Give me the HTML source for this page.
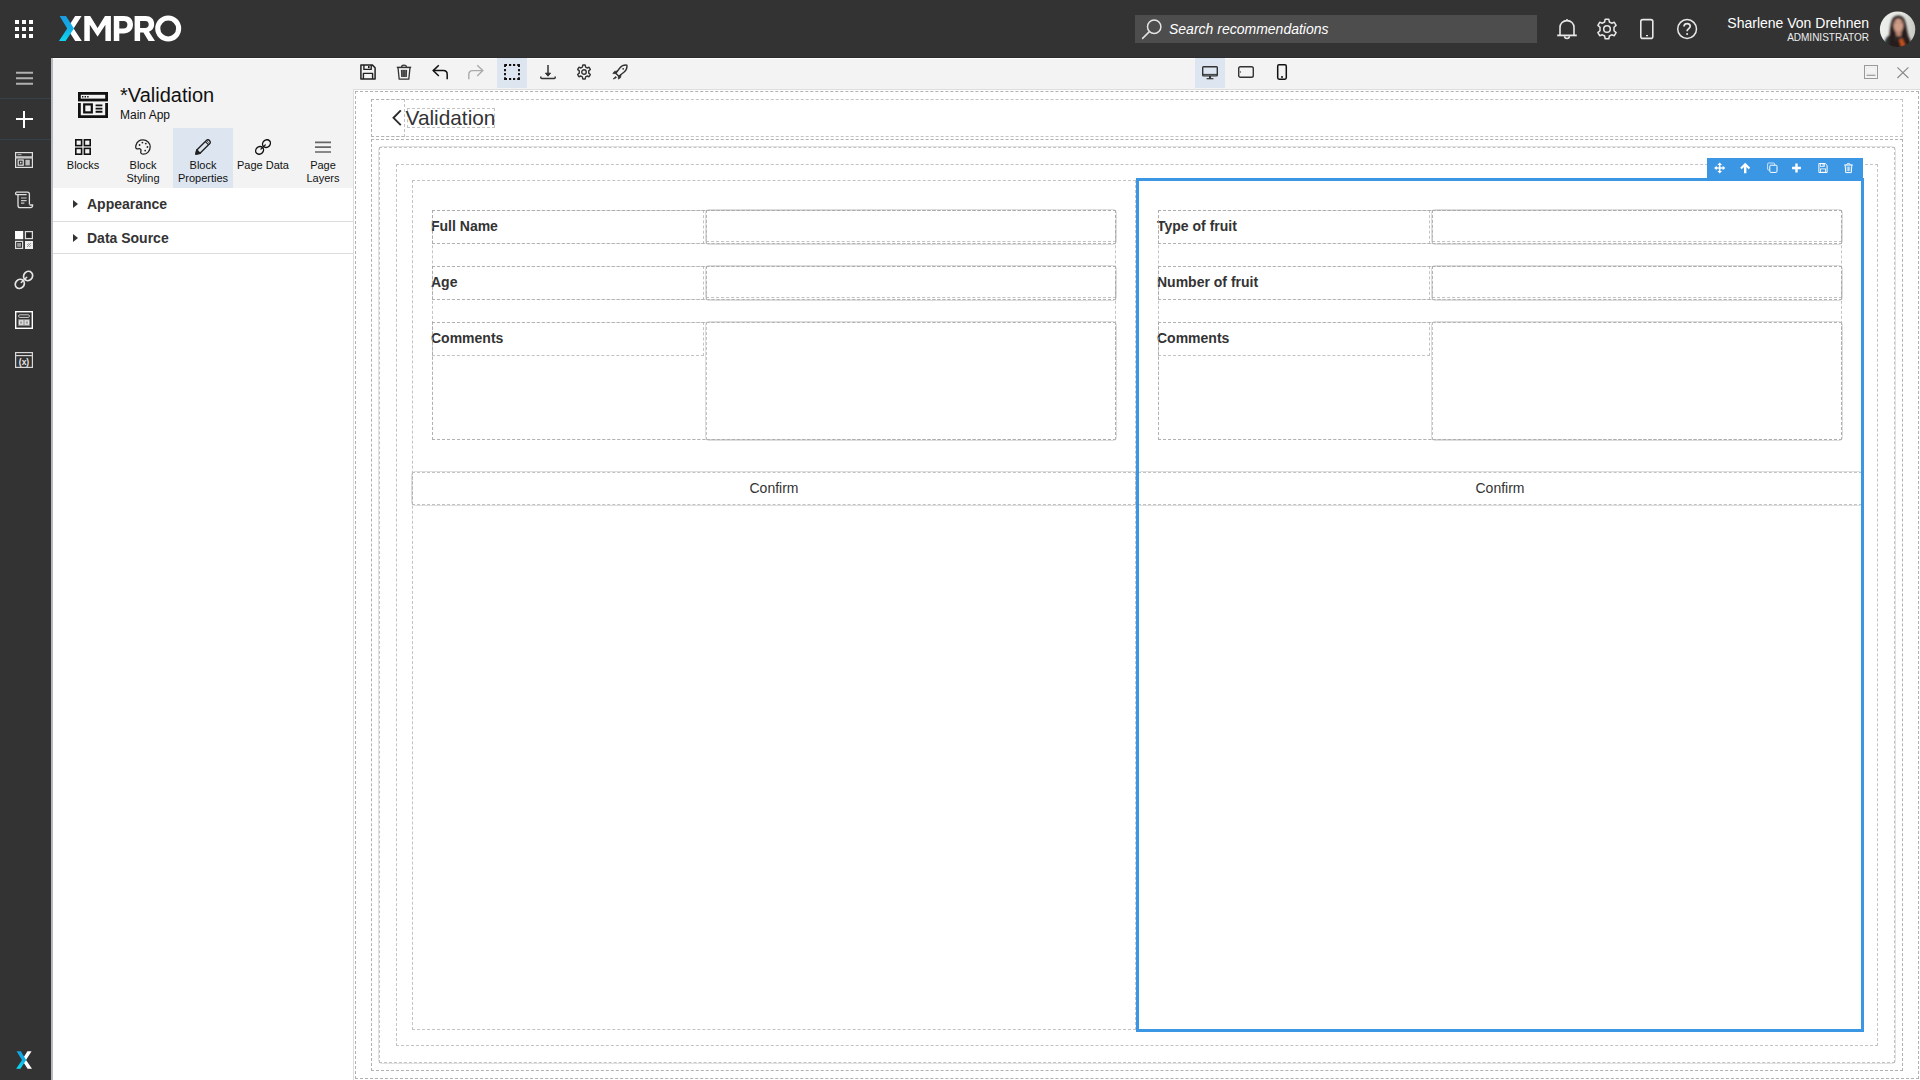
<!DOCTYPE html>
<html>
<head>
<meta charset="utf-8">
<title>Validation</title>
<style>
*{box-sizing:border-box;margin:0;padding:0}
html,body{width:1920px;height:1080px;overflow:hidden;background:#fff}
body{font-family:"Liberation Sans",sans-serif;color:#333;position:relative}
.abs{position:absolute}
/* top bar */
#top{position:absolute;left:0;top:0;width:1920px;height:58px;background:#333}
#nav{position:absolute;left:0;top:58px;width:51px;height:1022px;background:#333;border-right:1px solid #2e3439}
#navline{position:absolute;left:51px;top:58px;width:2px;height:1022px;background:#b9b9b9}
#whiteline{position:absolute;left:53px;top:58px;width:1867px;height:1px;background:#fff}
#phead{position:absolute;left:53px;top:59px;width:1867px;height:30px;background:#f3f3f3}
#pleft{position:absolute;left:53px;top:59px;width:300px;height:129px;background:#f3f3f3}
#tabact{position:absolute;left:173px;top:128px;width:60px;height:60px;background:#dde6f0}
.tab{position:absolute;top:128px;width:60px;height:60px;text-align:center;font-size:11px;line-height:13px;color:#111}
.tab span{position:absolute;left:0;width:60px;top:31px}
.tab svg{position:absolute;left:22px;top:11px}
.acc{position:absolute;left:53px;width:300px;height:1px;background:#ddd}
.acct{position:absolute;left:87px;font-size:14px;font-weight:bold;color:#333;line-height:16px}
.tri{position:absolute;left:73px;width:0;height:0;border-left:5px solid #333;border-top:4px solid transparent;border-bottom:4px solid transparent}
/* canvas */
#cvb{position:absolute;left:353px;top:89px;width:1567px;height:991px;background:#fff;border-left:1px solid #ddd;border-top:1px solid #ddd}
.d{position:absolute;outline:1px dashed rgba(170,170,170,.7);outline-offset:-2px}
.dd{position:absolute;outline:1px dashed rgba(170,170,170,.91);outline-offset:-2px}
.lbl{font-size:14px;font-weight:bold;color:#333;line-height:16px;padding-top:9px;white-space:nowrap}
.inp{position:absolute;border:1px solid #ddd;border-radius:4px}
.btn{position:absolute;border:1px solid #ddd;border-radius:4px;font-size:14px;line-height:16px;text-align:center;padding-top:8px;color:#333}
.tbi{position:absolute;top:64px;width:16px;height:16px}
</style>
</head>
<body>
<div id="top"></div>
<div id="nav"></div>
<div class="abs" style="left:51px;top:57px;width:1869px;height:1px;background:#2c2c2c"></div>
<div id="navline"></div>
<div id="whiteline"></div>
<div id="phead"></div>
<div id="pleft"></div>
<div id="tabact"></div>


<!-- TOP BAR -->
<svg class="abs" style="left:15px;top:20px" width="18" height="18" viewBox="0 0 18 18" fill="#fff">
<rect x="0" y="0" width="4" height="4"/><rect x="7" y="0" width="4" height="4"/><rect x="14" y="0" width="4" height="4"/>
<rect x="0" y="7" width="4" height="4"/><rect x="7" y="7" width="4" height="4"/><rect x="14" y="7" width="4" height="4"/>
<rect x="0" y="14" width="4" height="4"/><rect x="7" y="14" width="4" height="4"/><rect x="14" y="14" width="4" height="4"/>
</svg>
<svg class="abs" id="logo" style="left:58px;top:15px" width="126" height="28" viewBox="58 15 126 28">
<defs>
<linearGradient id="lg1" x1="0" y1="0" x2="0" y2="1"><stop offset="0" stop-color="#1a9be0"/><stop offset="0.5" stop-color="#12aee6"/><stop offset="1" stop-color="#0fd6f2"/></linearGradient>
</defs>
<!-- X white right chevron -->
<path d="M75.2 16 L81.6 16 L73.6 28.5 L81.8 41 L75.2 41 L67.2 28.5 Z" fill="#fff"/>
<!-- X blue left chevron -->
<path d="M59.6 16 L66 16 L74 28.5 L65.6 41 L59 41 L67.2 28.5 Z" fill="url(#lg1)"/>
<!-- M -->
<path d="M84.3 41 L84.3 16 L90.2 16 L97.6 28 L105 16 L110.9 16 L110.9 41 L105.4 41 L105.4 24.8 L97.7 36.6 L97.5 36.6 L89.8 24.8 L89.8 41 Z" fill="#fff"/>
<!-- P -->
<path fill-rule="evenodd" d="M113.8 41 L113.8 16 L124 16 C129.6 16 133 19.4 133 24.6 C133 30 129.2 33.4 123.6 33.4 L119.3 33.4 L119.3 41 Z M119.3 21 L119.3 28.5 L123.6 28.5 C126 28.5 127.4 27 127.4 24.7 C127.4 22.3 126 21 123.6 21 Z" fill="#fff"/>
<!-- R -->
<path fill-rule="evenodd" d="M134.6 41 L134.6 16 L145.6 16 C151 16 154.2 19 154.2 24 C154.2 28 152.2 30.6 149 31.7 L155 41 L148.6 41 L143.4 32.6 L140.1 32.6 L140.1 41 Z M140.1 21 L140.1 27.9 L145.2 27.9 C147.4 27.9 148.7 26.6 148.7 24.4 C148.7 22.2 147.4 21 145.2 21 Z" fill="#fff"/>
<!-- O -->
<path fill-rule="evenodd" d="M168.2 15.5 A13 13 0 1 0 168.2 41.5 A13 13 0 1 0 168.2 15.5 Z M168.2 20.6 A7.9 7.9 0 1 1 168.2 36.4 A7.9 7.9 0 1 1 168.2 20.6 Z" fill="#fff"/>
</svg>
<div class="abs" style="left:1135px;top:15px;width:402px;height:28px;background:#4d4d4d"></div>
<svg class="abs" style="left:1140px;top:17px" width="24" height="24" viewBox="0 0 24 24" fill="none" stroke="#e4e4e4" stroke-width="1.5"><circle cx="14.2" cy="9.8" r="6.7"/><path d="M9.4 14.6 L2.6 21.4" stroke-linecap="round"/></svg>
<div class="abs" style="left:1169px;top:21px;font-size:14px;line-height:16px;font-style:italic;color:#fff;white-space:nowrap">Search recommendations</div>
<!-- bell -->
<svg class="abs" style="left:1555px;top:17px" width="24" height="24" viewBox="0 0 24 24" fill="none" stroke="#e8e8e8" stroke-width="1.6">
<path d="M5 18.2 L5 10.6 C5 6.4 8 3.6 12 3.6 C16 3.6 19 6.4 19 10.6 L19 18.2"/><path d="M2.2 18.4 L21.8 18.4" stroke-width="1.8"/><path d="M9.6 19.2 C9.6 22.2 14.4 22.2 14.4 19.2"/><circle cx="12" cy="2.8" r="0.9" fill="#e8e8e8" stroke="none"/>
</svg>
<!-- gear -->
<svg class="abs" style="left:1595px;top:17px" width="24" height="24" viewBox="0 0 24 24" fill="none" stroke="#e8e8e8" stroke-width="1.5" stroke-linejoin="round">
<path d="M10.2 2.2 L13.8 2.2 L14.4 5 L16.6 6.2 L19.3 5.3 L21.1 8.4 L19 10.3 L19 13.7 L21.1 15.6 L19.3 18.7 L16.6 17.8 L14.4 19 L13.8 21.8 L10.2 21.8 L9.6 19 L7.4 17.8 L4.7 18.7 L2.9 15.6 L5 13.7 L5 10.3 L2.9 8.4 L4.7 5.3 L7.4 6.2 L9.6 5 Z"/>
<circle cx="12" cy="12" r="3.3"/>
</svg>
<!-- mobile -->
<svg class="abs" style="left:1635px;top:17px" width="24" height="24" viewBox="0 0 24 24" fill="none" stroke="#e8e8e8" stroke-width="1.6">
<rect x="5.8" y="2.6" width="12" height="18.8" rx="2"/><path d="M11 18.6 L13 18.6" stroke-width="1.4"/>
</svg>
<!-- help -->
<svg class="abs" style="left:1675px;top:17px" width="24" height="24" viewBox="0 0 24 24" fill="none" stroke="#e8e8e8" stroke-width="1.5">
<circle cx="12.1" cy="12" r="9.4"/><path d="M9 9.6 C9 7.6 10.4 6.6 12.1 6.6 C13.9 6.6 15.2 7.7 15.2 9.3 C15.2 11.6 12.1 11.6 12.1 14.2" stroke-width="1.7"/><circle cx="12.1" cy="16.9" r="1" fill="#e8e8e8" stroke="none"/>
</svg>
<div class="abs" style="left:1569px;top:15px;width:300px;text-align:right;font-size:14px;line-height:16px;color:#fff;white-space:nowrap">Sharlene Von Drehnen</div>
<div class="abs" style="left:1569px;top:32px;width:300px;text-align:right;font-size:10px;line-height:12px;color:#eee;white-space:nowrap">ADMINISTRATOR</div>
<svg class="abs" style="left:1872px;top:3px" width="52" height="52" viewBox="-8 -8 52 52">
<defs><clipPath id="avc"><circle cx="17.6" cy="18.2" r="17.7"/></clipPath>
<linearGradient id="avbg" x1="0" y1="0" x2="1" y2="0"><stop offset="0" stop-color="#eef0ee"/><stop offset="0.6" stop-color="#e4e6e2"/><stop offset="1" stop-color="#bfc1b8"/></linearGradient>
<filter id="avb" x="-20%" y="-20%" width="140%" height="140%"><feGaussianBlur stdDeviation="0.9"/></filter></defs>
<g>
<rect x="-2" y="-2" width="40" height="40" fill="url(#avbg)"/>
<g filter="url(#avb)">
<path d="M3 46 C3 30 6 25 11 24 L26 24 C30 26 32 30 32 46 Z" fill="#33302f"/>
<path d="M4 46 C3 30 6 25.5 10 24.5 L11 46 Z" fill="#2c3336"/>
<path d="M9.5 38 C9 30 9.6 12 12.6 7.6 C15 3.6 21.6 3.4 24 7.4 C26.6 12 27 22 30 30 L30 46 L9.5 46 Z" fill="#261d1b"/>
<ellipse cx="18.4" cy="14.6" rx="4.9" ry="7.2" fill="#cf9d88"/>
<path d="M15.5 20 L21.5 20 L21 25 L16.4 25 Z" fill="#b98672"/>
<path d="M14 26 C16 24.5 21 24.5 23.4 26 L23 30 L14.5 30 Z" fill="#2a2726"/>
<path d="M19 28.4 L22.4 27.6 L25.4 34.5 L21.4 36.6 Z" fill="#c4551f"/>
<path d="M14.6 11.6 L17 11.2 M19.8 11.2 L22.2 11.6" stroke="#7a5a50" stroke-width="0.9" fill="none"/>
</g>
</g>
<path fill-rule="evenodd" fill="#333" d="M-8 -8 H44 V44 H-8 Z M17.6 0.5 A17.7 17.7 0 1 0 17.6 35.9 A17.7 17.7 0 1 0 17.6 0.5 Z"/>
</svg>


<!-- NAV -->
<svg class="abs" style="left:16px;top:70px" width="17" height="17" viewBox="0 0 17 17" stroke="#b0b0b0" stroke-width="1.9"><path d="M0 2.8 L17 2.8 M0 8.3 L17 8.3 M0 13.7 L17 13.7"/></svg>
<div class="abs" style="left:0;top:98px;width:51px;height:1px;background:#35424c"></div>
<div class="abs" style="left:0;top:139px;width:51px;height:1px;background:#35424c"></div>
<div class="abs" style="left:16px;top:118px;width:17px;height:2px;background:#fff"></div>
<div class="abs" style="left:23px;top:111px;width:2px;height:17px;background:#fff"></div>
<!-- nav page icon -->
<svg class="abs" style="left:15px;top:152px" width="18" height="16" viewBox="0 0 18 16" fill="none" stroke="#e0e0e0">
<rect x="0.6" y="0.6" width="16.8" height="4.3" stroke-width="1.2"/>
<path d="M2.5 2.7 L6.5 2.7" stroke-width="1" stroke="#bbb"/>
<rect x="0.6" y="5.9" width="16.8" height="9.5" stroke-width="1.2"/>
<rect x="3.2" y="8" width="5" height="5.2" stroke-width="1.2"/><rect x="5" y="9.8" width="1.4" height="1.6" fill="#e0e0e0" stroke="none"/>
<rect x="10.4" y="7.8" width="4.4" height="5.6" fill="#bbb" stroke="none"/>
</svg>
<!-- nav scroll icon -->
<svg class="abs" style="left:15px;top:191px" width="19" height="18" viewBox="0 0 19 18" fill="none" stroke="#e0e0e0" stroke-width="1.3">
<path d="M1 1.2 L12.4 1.2 C13.8 1.2 14.4 2 14.4 3.2 L14.4 13.4"/>
<path d="M1 1.2 C0.4 2.4 0.6 3.2 1.2 3.6 L11.6 3.6" />
<path d="M3 3.8 L3 14.4 C3 15.8 4 16.6 5.2 16.6 L15.6 16.6 C17 16.6 17.8 15.6 17.6 14 L14.6 14"/>
<path d="M6 7 L11.6 7 M6 9.6 L11.6 9.6 M6 12.2 L9.4 12.2" stroke-width="1.2" stroke="#ccc"/>
</svg>
<!-- nav blocks icon -->
<svg class="abs" style="left:15px;top:231px" width="18" height="18" viewBox="0 0 18 18">
<rect x="0" y="0" width="8.2" height="8.2" fill="#fff"/>
<rect x="10.4" y="0.6" width="7" height="7" fill="none" stroke="#ddd" stroke-width="1.2"/><rect x="12" y="2.2" width="3.8" height="3.8" fill="#222"/>
<rect x="0.6" y="10.4" width="7" height="7" fill="none" stroke="#ddd" stroke-width="1.2"/><rect x="2.2" y="12" width="3.8" height="3.8" fill="#999"/>
<rect x="10" y="10" width="8" height="8" fill="#eee"/><path d="M12 16 L16 12 M12.2 14 L14 12.2 M14.2 16 L16 14.2" stroke="#888" stroke-width="0.9"/>
</svg>
<!-- nav link icon -->
<svg class="abs" style="left:14px;top:270px" width="20" height="20" viewBox="0 0 20 20" fill="none" stroke="#e6e6e6" stroke-width="1.7">
<ellipse cx="0" cy="0" rx="4.8" ry="4.3" transform="translate(5.8 13.9) rotate(-45)"/>
<ellipse cx="0" cy="0" rx="4.8" ry="4.3" transform="translate(14.1 6) rotate(-45)"/>
<path d="M7.3 12.5 L12.7 7.3" stroke-width="1.5" stroke-linecap="round"/>
</svg>
<!-- nav form icon -->
<svg class="abs" style="left:15px;top:311px" width="18" height="18" viewBox="0 0 18 18" fill="none" stroke="#fff">
<rect x="0.7" y="0.7" width="16.6" height="16.6" stroke-width="1.4"/>
<rect x="3.6" y="3.8" width="10.8" height="2.6" rx="1.2" stroke-width="1" stroke="#ccc"/>
<rect x="3.2" y="8.2" width="11.6" height="6.6" fill="#9a9a9a" stroke="none"/>
<rect x="4.6" y="9.8" width="3.2" height="3.4" stroke-width="1" stroke="#eee"/><rect x="10.2" y="9.8" width="3.2" height="3.4" stroke-width="1" stroke="#eee"/>
</svg>
<!-- nav variable icon -->
<svg class="abs" style="left:15px;top:352px" width="18" height="16" viewBox="0 0 18 16" fill="none" stroke="#d8d8d8">
<rect x="0.6" y="0.6" width="16.8" height="14.8" stroke-width="1.2"/>
<path d="M0.6 3.6 L17.4 3.6" stroke-width="1.2"/>
<text x="9" y="12.6" font-family="Liberation Sans, sans-serif" font-size="8.5" font-weight="bold" text-anchor="middle" fill="#e8e8e8" stroke="none">(x)</text>
</svg>
<!-- nav bottom X -->
<svg class="abs" style="left:14px;top:1050px" width="20" height="20" viewBox="0 0 20 20">
<defs><linearGradient id="lg2" x1="0" y1="0" x2="0" y2="1"><stop offset="0" stop-color="#12a4e4"/><stop offset="0.55" stop-color="#10b0e4"/><stop offset="1" stop-color="#0be0f4"/></linearGradient></defs>
<path d="M13.4 1.2 L17.6 1.2 L12 10 L18 18.8 L13.6 18.8 L8 10 Z" fill="#fff"/>
<path d="M2.6 1.2 L6.8 1.2 L12.2 10 L6.4 18.8 L2.2 18.8 L8 10 Z" fill="url(#lg2)"/>
</svg>

<!-- PANEL HEADER -->
<svg class="abs" style="left:78px;top:92px" width="30" height="26" viewBox="0 0 30 26" fill="none" stroke="#111">
<rect x="1.4" y="1.4" width="27.2" height="6.6" stroke-width="2.8"/>
<path d="M4 4.7 L5.4 4.7 M6.6 4.7 L8 4.7 M9.2 4.7 L10.6 4.7" stroke-width="1.6"/>
<path d="M1.4 11 L1.4 24.6 L28.6 24.6 L28.6 11" stroke-width="2.8"/>
<rect x="6.2" y="12.4" width="7.6" height="8" stroke-width="2.2"/>
<path d="M17.6 13.4 L24.4 13.4 M17.6 16.6 L24.4 16.6 M17.6 19.8 L24.4 19.8" stroke-width="1.9"/>
</svg>
<div class="abs" style="left:120px;top:84px;font-size:20px;line-height:22px;color:#111;white-space:nowrap">*Validation</div>
<div class="abs" style="left:120px;top:108px;font-size:12px;line-height:14px;color:#111;white-space:nowrap">Main App</div>
<!-- tabs -->
<div class="tab" style="left:53px">
<svg width="16" height="16" viewBox="0 0 16 16" fill="none" stroke="#111" stroke-width="1.6"><rect x="0.8" y="0.8" width="5.8" height="5.8"/><rect x="9.4" y="0.8" width="5.8" height="5.8"/><rect x="0.8" y="9.4" width="5.8" height="5.8"/><rect x="9.4" y="9.4" width="5.8" height="5.8"/></svg>
<span>Blocks</span></div>
<div class="tab" style="left:113px">
<svg width="16" height="16" viewBox="0 0 16 16" fill="none" stroke="#222" stroke-width="1.3"><path d="M8 0.9 C12 0.9 15.2 4 15.2 7.8 C15.2 12 12 15.2 8.4 15.2 C6.4 15.2 5.4 14 5.8 12.6 C6.2 11.2 6.4 10.2 5 9.8 C3.6 9.4 2.6 10.4 1.6 9.8 C0.6 9.2 0.6 7.6 1 6.2 C1.8 3.2 4.6 0.9 8 0.9 Z"/><circle cx="4.6" cy="6" r="0.9" fill="#222" stroke="none"/><circle cx="7.4" cy="3.6" r="0.9" fill="#222" stroke="none"/><circle cx="10.8" cy="4.6" r="0.9" fill="#222" stroke="none"/><circle cx="12.4" cy="8" r="0.9" fill="#222" stroke="none"/><circle cx="10.2" cy="11.6" r="0.9" fill="#222" stroke="none"/></svg>
<span>Block<br>Styling</span></div>
<div class="tab" style="left:173px">
<svg width="16" height="16" viewBox="0 0 16 16" fill="none" stroke="#222" stroke-width="1.4" stroke-linejoin="round"><path d="M11.6 1.2 C12.4 0.4 13.6 0.6 14.4 1.4 C15.4 2.4 15.6 3.6 14.8 4.4 L5 14.2 L0.9 15.1 L1.8 11 Z"/><path d="M10.4 2.6 L13.4 5.6" stroke-width="1.2"/><path d="M1.8 11 L5 14.2 L0.9 15.1 Z" fill="#222"/><path d="M12.2 2.2 L13.6 3.6" stroke-width="0.9"/></svg>
<span>Block<br>Properties</span></div>
<div class="tab" style="left:233px">
<svg width="16" height="16" viewBox="0 0 16 16" fill="none" stroke="#111" stroke-width="1.4"><ellipse cx="0" cy="0" rx="4.2" ry="3.6" transform="translate(4.6 11.4) rotate(-45)"/><ellipse cx="0" cy="0" rx="4.2" ry="3.6" transform="translate(11.5 4.6) rotate(-45)"/><path d="M5.9 10.1 L10.3 5.9" stroke-width="1.3" stroke-linecap="round"/></svg>
<span>Page Data</span></div>
<div class="tab" style="left:293px">
<svg width="16" height="16" viewBox="0 0 16 16" fill="none" stroke="#666" stroke-width="1.7"><path d="M0 3.3 L16 3.3 M0 8.1 L16 8.1 M0 13 L16 13"/></svg>
<span>Page<br>Layers</span></div>
<!-- accordion -->
<div class="tri" style="top:200px"></div><div class="acct" style="top:196px">Appearance</div>
<div class="acc" style="top:221px"></div>
<div class="tri" style="top:234px"></div><div class="acct" style="top:230px">Data Source</div>
<div class="acc" style="top:253px"></div>

<!-- canvas -->
<div id="cvb"></div>
<div id="canvas">
<div class="dd" style="left:354px;top:90px;width:1566px;height:990px"></div>
<div class="d" style="left:370px;top:98px;width:1534px;height:40px"></div>
<div class="d" style="left:370px;top:98px;width:36px;height:40px"></div>
<div class="d" style="left:406px;top:107px;width:90px;height:22px"></div>
<div class="dd" style="left:370px;top:138px;width:1534px;height:934px"></div>
<div class="abs" style="left:378px;top:146px;width:1518px;height:918px;border:1px solid #e2e2e2;border-radius:4px"></div><div class="d" style="left:378px;top:146px;width:1518px;height:918px"></div>
<div class="d" style="left:395px;top:163px;width:1484px;height:884px"></div>
<div class="d" style="left:411px;top:179px;width:726px;height:852px"></div>
<div class="d" style="left:1137px;top:179px;width:726px;height:852px"></div>
<div class="abs" style="left:405.6px;top:107px;width:92px;height:22px;font-size:20.8px;line-height:22px;color:#333;white-space:nowrap">Validation</div>
<svg class="abs" style="left:390px;top:108px" width="14" height="20" viewBox="0 0 14 20"><path d="M10.8 2.4 L3.5 9.8 L10.8 17.2" fill="none" stroke="#2a2a2a" stroke-width="1.9"/></svg>
<div class="d" style="left:431px;top:209px;width:686px;height:232px"></div>
<div class="d" style="left:431px;top:209px;width:686px;height:36px"></div>
<div class="d lbl" style="left:431px;top:209px;width:274px;height:36px">Full Name</div>
<div class="inp" style="left:705px;top:209px;width:412px;height:36px"></div><div class="d" style="left:705px;top:209px;width:412px;height:36px"></div><div class="d" style="left:705px;top:209px;width:412px;height:34px"></div>
<div class="d" style="left:431px;top:265px;width:686px;height:36px"></div>
<div class="d lbl" style="left:431px;top:265px;width:274px;height:36px">Age</div>
<div class="inp" style="left:705px;top:265px;width:412px;height:36px"></div><div class="d" style="left:705px;top:265px;width:412px;height:36px"></div><div class="d" style="left:705px;top:265px;width:412px;height:34px"></div>
<div class="d" style="left:431px;top:321px;width:686px;height:120px"></div>
<div class="d lbl" style="left:431px;top:321px;width:274px;height:36px">Comments</div>
<div class="inp" style="left:705px;top:321px;width:412px;height:120px"></div><div class="d" style="left:705px;top:321px;width:412px;height:120px"></div>
<div class="btn" style="left:411px;top:471px;width:726px;height:35px">Confirm</div><div class="d" style="left:411px;top:471px;width:726px;height:35px"></div>
<div class="d" style="left:1157px;top:209px;width:686px;height:232px"></div>
<div class="d" style="left:1157px;top:209px;width:686px;height:36px"></div>
<div class="d lbl" style="left:1157px;top:209px;width:274px;height:36px">Type of fruit</div>
<div class="inp" style="left:1431px;top:209px;width:412px;height:36px"></div><div class="d" style="left:1431px;top:209px;width:412px;height:36px"></div><div class="d" style="left:1431px;top:209px;width:412px;height:34px"></div>
<div class="d" style="left:1157px;top:265px;width:686px;height:36px"></div>
<div class="d lbl" style="left:1157px;top:265px;width:274px;height:36px">Number of fruit</div>
<div class="inp" style="left:1431px;top:265px;width:412px;height:36px"></div><div class="d" style="left:1431px;top:265px;width:412px;height:36px"></div><div class="d" style="left:1431px;top:265px;width:412px;height:34px"></div>
<div class="d" style="left:1157px;top:321px;width:686px;height:120px"></div>
<div class="d lbl" style="left:1157px;top:321px;width:274px;height:36px">Comments</div>
<div class="inp" style="left:1431px;top:321px;width:412px;height:120px"></div><div class="d" style="left:1431px;top:321px;width:412px;height:120px"></div>
<div class="btn" style="left:1137px;top:471px;width:726px;height:35px">Confirm</div><div class="d" style="left:1137px;top:471px;width:726px;height:35px"></div>
<div class="abs" style="left:1136px;top:178px;width:728px;height:854px;border:3px solid #3b97e3"></div>
<div class="abs" id="seltb" style="left:1707px;top:158px;width:156px;height:21px;background:#3b97e3"></div>
</div>

<!-- TOOLBAR -->
<div class="abs" style="left:497px;top:58px;width:30px;height:30px;background:#dde6f0"></div>
<div class="abs" style="left:1195px;top:58px;width:30px;height:30px;background:#dde6f0"></div>
<!-- save -->
<svg class="tbi" style="left:360px" viewBox="0 0 16 16" fill="none" stroke="#222" stroke-width="1.5" stroke-linejoin="round">
<path d="M0.9 0.9 L12.2 0.9 L15.1 3.8 L15.1 15.1 L0.9 15.1 Z"/>
<path d="M3.9 1 L3.9 5.4 L11.2 5.4 L11.2 1" stroke-width="1.4"/><rect x="8" y="2" width="1.6" height="2.2" fill="#222" stroke="none"/>
<path d="M3.4 15 L3.4 9.4 L12.6 9.4 L12.6 15" stroke-width="1.4"/>
</svg>
<!-- trash -->
<svg class="tbi" style="left:396px" viewBox="0 0 16 16" fill="none" stroke="#333" stroke-width="1.3" stroke-linejoin="round">
<path d="M0.8 3.4 L15.2 3.4" stroke-width="1.5"/><path d="M5.6 3 C5.6 0.6 10.4 0.6 10.4 3" />
<path d="M2 3.6 L3.2 15.2 L12.8 15.2 L14 3.6"/>
<path d="M5.4 6 L5.8 13 M7.2 6 L7.3 13 M8.8 6 L8.7 13 M10.6 6 L10.2 13" stroke-width="1.1"/>
<rect x="5.2" y="5.8" width="5.6" height="7.2" fill="#444" stroke="none" opacity="0.75"/>
</svg>
<!-- undo -->
<svg class="tbi" style="left:432px" viewBox="0 0 16 16" fill="none" stroke="#111" stroke-width="1.5">
<path d="M6.8 1.2 L1.2 6.6 L6.8 12"/><path d="M1.4 6.6 L11.4 6.6 C14 6.6 15.2 8.2 15.2 10.4 L15.2 15.2"/>
</svg>
<!-- redo -->
<svg class="tbi" style="left:468px" viewBox="0 0 16 16" fill="none" stroke="#aaa" stroke-width="1.4">
<path d="M9.2 1.2 L14.8 6.6 L9.2 12"/><path d="M14.6 6.6 L4.6 6.6 C2 6.6 0.8 8.2 0.8 10.4 L0.8 15.2"/>
</svg>
<!-- select -->
<svg class="tbi" style="left:504px" viewBox="0 0 16 16" fill="none" stroke="#111" stroke-width="1.9">
<path d="M0.4 1 L3 1 M5 1 L7.2 1 M9 1 L11.2 1 M13.2 1 L15 1 L15 3 M15 5 L15 7.2 M15 9 L15 11.2 M15 13.2 L15 15 L13.2 15 M11.2 15 L9 15 M7.2 15 L5 15 M3 15 L1 15 L1 13.2 M1 11.2 L1 9 M1 7.2 L1 5 M1 3 L1 0.4"/>
</svg>
<!-- download -->
<svg class="tbi" style="left:540px" viewBox="0 0 16 16" fill="none" stroke="#333" stroke-width="1.5">
<path d="M8 1 L8 11"/><path d="M5.4 9.2 L8 12.2 L10.6 9.2 Z" fill="#333" stroke-width="1"/><path d="M0.8 12.6 L0.8 13.4 C0.8 14 1.2 14.4 1.8 14.4 L14.2 14.4 C14.8 14.4 15.2 14 15.2 13.4 L15.2 12.6"/>
</svg>
<!-- gear -->
<svg class="tbi" style="left:576px" viewBox="0 0 24 24" fill="none" stroke="#333" stroke-width="2.1" stroke-linejoin="round">
<path d="M10.2 1.6 L13.8 1.6 L14.5 4.8 L16.6 6 L19.6 4.9 L21.5 8.1 L19.1 10.3 L19.1 13.7 L21.5 15.9 L19.6 19.1 L16.6 18 L14.5 19.2 L13.8 22.4 L10.2 22.4 L9.5 19.2 L7.4 18 L4.4 19.1 L2.5 15.9 L4.9 13.7 L4.9 10.3 L2.5 8.1 L4.4 4.9 L7.4 6 L9.5 4.8 Z"/>
<circle cx="12" cy="12" r="3.4"/>
</svg>
<!-- rocket -->
<svg class="tbi" style="left:612px" viewBox="0 0 16 16" fill="none" stroke="#333" stroke-width="1.4" stroke-linejoin="round">
<path d="M14.9 1.1 C12 0.8 9.6 1.8 8 3.8 L3.8 9.2 L6.8 12.2 L12.2 8 C14.2 6.4 15.2 4 14.9 1.1 Z"/>
<circle cx="11.2" cy="4.8" r="0.9" fill="#333" stroke="none"/>
<path d="M5.4 7 L2.4 7.4 L0.9 9.6 L3.6 9.6 Z" fill="#333" stroke-width="0.8"/>
<path d="M9 10.6 L8.6 13.6 L6.4 15.1 L6.4 12.4 Z" fill="#333" stroke-width="0.8"/>
<path d="M3.6 12.4 L1 15 L3 14.6 L4.6 13.4 Z" fill="#333" stroke-width="0.6"/>
</svg>
<!-- desktop -->
<svg class="abs" style="left:1202px;top:65px" width="16" height="16" viewBox="0 0 16 16" fill="none" stroke="#333" stroke-width="1.4">
<rect x="0.7" y="1.7" width="14.6" height="9.2" rx="0.8"/><path d="M0.8 9.4 L15.2 9.4" stroke-width="1"/><path d="M8 11 L8 13.4" stroke-width="2"/><path d="M4.6 13.7 L11.4 13.7" stroke-width="1.2"/>
</svg>
<!-- tablet -->
<svg class="abs" style="left:1238px;top:64px" width="16" height="16" viewBox="0 0 16 16" fill="none" stroke="#333" stroke-width="1.4">
<rect x="0.7" y="2.7" width="14.6" height="10.6" rx="1.8"/><path d="M2.4 7.2 L2.4 8.8" stroke-width="0.8"/>
</svg>
<!-- mobile -->
<svg class="abs" style="left:1274px;top:64px" width="16" height="16" viewBox="0 0 16 16" fill="none" stroke="#111" stroke-width="1.5">
<rect x="3.7" y="0.8" width="8.6" height="14.4" rx="1.4"/><path d="M7 13 L9 13" stroke-width="1.6"/>
</svg>
<!-- minimize -->
<svg class="abs" style="left:1863px;top:64px" width="16" height="16" viewBox="0 0 16 16" fill="none" stroke="#999" stroke-width="1">
<rect x="1.5" y="1.5" width="13" height="13"/><path d="M3.6 11.3 L12.4 11.3" stroke-width="1.2"/><rect x="3.6" y="3.6" width="8.8" height="5.6" stroke="#eaeaea" stroke-width="0.6"/>
</svg>
<!-- close -->
<svg class="abs" style="left:1895px;top:64px" width="16" height="16" viewBox="0 0 16 16" fill="none" stroke="#888" stroke-width="1.1">
<path d="M2.4 3.4 L13.4 14 M13.4 3.4 L2.4 14"/>
</svg>
<!-- selection toolbar icons -->
<svg class="abs" style="left:1707px;top:158px" width="156" height="21" viewBox="0 0 156 21" fill="#fff" stroke="none">
<!-- move -->
<path d="M12.7 4.4 L15 7 L13.5 7 L13.5 9.2 L15.7 9.2 L15.7 7.7 L18.3 10 L15.7 12.3 L15.7 10.8 L13.5 10.8 L13.5 13 L15 13 L12.7 15.6 L10.4 13 L11.9 13 L11.9 10.8 L9.7 10.8 L9.7 12.3 L7.1 10 L9.7 7.7 L9.7 9.2 L11.9 9.2 L11.9 7 L10.4 7 Z"/>
<!-- up arrow -->
<path d="M38.2 4.8 L43.2 9.8 L41.7 11.3 L39.4 9 L39.4 15.2 L37 15.2 L37 9 L34.7 11.3 L33.2 9.8 Z"/>
<!-- copy -->
<rect x="60.6" y="5" width="7" height="7" rx="1" fill="none" stroke="#fff" stroke-width="0.9" opacity="0.8"/>
<rect x="62.8" y="7.2" width="7.2" height="7.2" rx="1" fill="#3b97e3" stroke="#fff" stroke-width="1"/>
<!-- plus -->
<path d="M88.3 5.6 L90.7 5.6 L90.7 8.8 L93.9 8.8 L93.9 11.2 L90.7 11.2 L90.7 14.4 L88.3 14.4 L88.3 11.2 L85.1 11.2 L85.1 8.8 L88.3 8.8 Z"/>
<!-- save -->
<path d="M111.9 5.5 L118.2 5.5 L120.1 7.4 L120.1 14.5 L111.9 14.5 Z" fill="none" stroke="#fff" stroke-width="1"/>
<rect x="113.5" y="5.7" width="4" height="2.8" fill="none" stroke="#fff" stroke-width="0.8" opacity="0.9"/><rect x="115.6" y="6.1" width="1.1" height="1.7"/>
<rect x="113.4" y="10.9" width="5.2" height="3.3" fill="none" stroke="#fff" stroke-width="0.8"/>
<!-- trash -->
<path d="M137.2 7 L145.8 7" stroke="#fff" stroke-width="1.1"/><path d="M139.8 6.8 C139.8 4.9 143.2 4.9 143.2 6.8" fill="none" stroke="#fff" stroke-width="1"/>
<path d="M138.2 7.2 L138.7 14.6 L144.3 14.6 L144.8 7.2" fill="none" stroke="#fff" stroke-width="1"/>
<path d="M140.2 8.6 L140.2 13.2 M141.5 8.6 L141.5 13.2 M142.8 8.6 L142.8 13.2" stroke="#fff" stroke-width="0.7"/>
</svg>

</body>
</html>
